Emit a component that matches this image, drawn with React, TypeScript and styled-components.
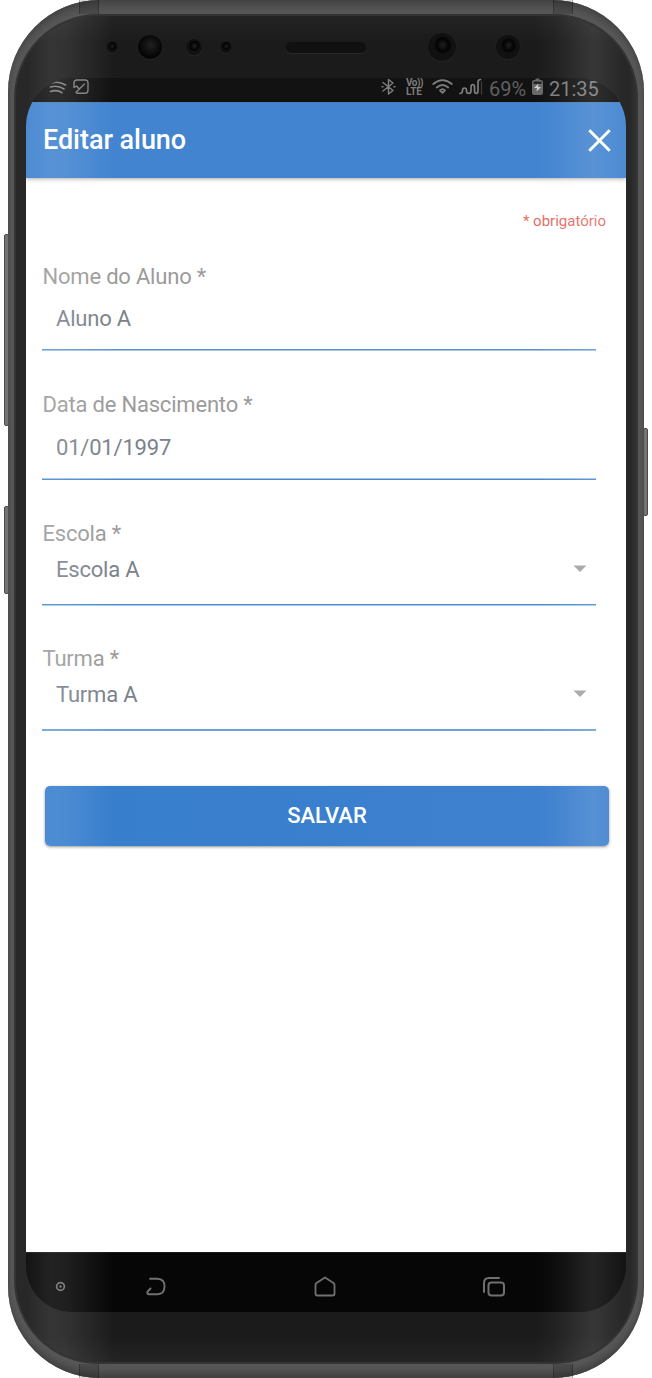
import React from "react";
import styled, { createGlobalStyle } from "styled-components";

const GlobalStyle = createGlobalStyle`
  *, *::before, *::after { box-sizing: border-box; }
  body { margin: 0; background: #fff; font-family: Roboto, "Liberation Sans", sans-serif; }
`;

const Page = styled.div`
  width: 652px;
  height: 1378px;
  padding: 0 8px;
  overflow: hidden;
`;

const Device = styled.div`
  position: relative;
  width: 636px;
  height: 1378px;
  padding: 14px 6px;
  border-radius: 92px;
  background: #585858;
  box-shadow: inset 0 9px 8px -4px #414141, inset 0 -9px 8px -4px #3e3e3e, inset 0 0 2px #444;
`;

const SideKey = styled.div<{ $side: "left" | "right"; $top: number; $length: number }>`
  position: absolute;
  ${(p) => p.$side}: -4px;
  top: ${(p) => p.$top}px;
  width: 5px;
  height: ${(p) => p.$length}px;
  border: 1px solid #4d4d4d;
  border-radius: 2px;
  background: #747474;
`;

const Antenna = styled.div<{ $left: number; $edge: "top" | "bottom" }>`
  position: absolute;
  left: ${(p) => p.$left}px;
  ${(p) => p.$edge}: 0;
  width: 20px;
  height: 14px;
  background: rgba(0, 0, 0, 0.15);
  border: solid rgba(0, 0, 0, 0.22);
  border-width: 0 1px;
`;

const Bezel = styled.div`
  position: relative;
  display: flex;
  flex-direction: column;
  height: 1350px;
  padding: 0 10px;
  border: 2px solid #343434;
  border-radius: 84px;
  background: linear-gradient(#242424, #1b1b1b 26px, #1b1b1b 1320px, #242424);
  overflow: hidden;
`;

const Glare = styled.div`
  position: absolute;
  inset: 0;
  pointer-events: none;
  background:
    linear-gradient(to right, rgba(255,255,255,.06), rgba(255,255,255,.055) 10px, rgba(255,255,255,.115) 34px, rgba(255,255,255,.1) 50px, rgba(255,255,255,.05) 74px, transparent 98px),
    linear-gradient(to left, rgba(255,255,255,.1), rgba(255,255,255,.055) 6px, rgba(255,255,255,.055) 11px, rgba(255,255,255,.12) 42px, rgba(255,255,255,.1) 52px, rgba(255,255,255,.03) 80px, transparent 100px);
`;

const Sensors = styled.div`
  display: flex;
  align-items: center;
  flex: none;
  height: 62px;
  padding-left: 80px;
`;

const Lens = styled.div<{ $size: number; $gap: number; $core: number }>`
  flex: none;
  width: ${(p) => p.$size}px;
  height: ${(p) => p.$size}px;
  margin-right: ${(p) => p.$gap}px;
  border-radius: 50%;
  background: radial-gradient(circle at 53% 43%, #202020 0, #050505 ${(p) => p.$core}%, #050505 ${(p) => p.$core + 6}%, #111 ${(p) => p.$core + 16}%);
  box-shadow: 0 0 0 1px #202020, 0 1px 1px #303030;
`;

const Speaker = styled.div`
  width: 80px;
  height: 11px;
  margin-right: 62px;
  border-radius: 6px;
  background: #101010;
  box-shadow: 0 1px 1px #2b2b2b;
`;

const Screen = styled.div`
  display: flex;
  flex-direction: column;
  flex: none;
  width: 600px;
  height: 1234px;
  border-radius: 48px 48px 46px 46px;
  overflow: hidden;
`;

const StatusBar = styled.div`
  display: flex;
  align-items: flex-start;
  flex: none;
  height: 24px;
  padding: 0 27px 0 23px;
  background: #121212;
  color: #7d7d7d;
  svg { display: block; flex: none; }
`;

const StatusGroup = styled.div<{ $end?: boolean }>`
  display: flex;
  gap: 6px;
  margin-left: ${(p) => (p.$end ? "auto" : "0")};
`;

const StatusText = styled.span<{ $width: number; $dim?: boolean }>`
  width: ${(p) => p.$width}px;
  font-size: 20px;
  line-height: 23px;
  white-space: nowrap;
  color: ${(p) => (p.$dim ? "#606060" : "#7d7d7d")};
`;

const Volte = styled.div`
  display: flex;
  flex-direction: column;
  width: 18px;
  margin: 0 2px 0 4px;
  font-size: 10px;
  font-weight: 700;
  line-height: 9px;
  letter-spacing: -0.4px;
  white-space: nowrap;
`;

const VolteLine = styled.span<{ $spacing: number }>`
  letter-spacing: ${(p) => p.$spacing}px;
`;

const AppBar = styled.header`
  display: flex;
  align-items: center;
  justify-content: space-between;
  flex: none;
  height: 76px;
  padding: 0 15px 1px 17px;
  position: relative;
  background: #4284d0;
  border-top: 1px solid #4b7db8;
  box-shadow: 0 1px 4px rgba(0, 0, 0, 0.35);
  color: #fff;
`;

const Title = styled.h1`
  margin: 0;
  font-size: 27px;
  font-weight: 500;
  line-height: 36px;
  letter-spacing: -0.05px;
`;

const Form = styled.form`
  display: flex;
  flex-direction: column;
  flex: 1;
  padding: 33px 17px 0 16px;
  background: #fff;
`;

const RequiredNote = styled.div`
  align-self: flex-end;
  height: 20px;
  margin: 0 3px 30px 0;
  font-size: 15px;
  line-height: 20px;
  color: #e56b65;
`;

const Field = styled.label<{ $gap: number }>`
  display: flex;
  flex-direction: column;
  width: 554px;
  margin-bottom: ${(p) => p.$gap}px;
`;

const LabelText = styled.span`
  height: 30px;
  padding-left: 0.5px;
  font-size: 22px;
  line-height: 31px;
  letter-spacing: -0.2px;
  color: #9b9b9b;
`;

const Value = styled.span<{ $before: number; $after: number }>`
  display: flex;
  align-items: center;
  justify-content: space-between;
  padding: ${(p) => p.$before}px 9px ${(p) => p.$after}px 14px;
  font-size: 22px;
  line-height: 30px;
  letter-spacing: -0.2px;
  color: #7a828c;
  svg { margin-bottom: 3px; }
`;

const Underline = styled.span<{ $upper: string; $lower: string }>`
  height: 2px;
  border-top: 1px solid ${(p) => p.$upper};
  background: ${(p) => p.$lower};
`;

const SaveButton = styled.button`
  height: 60px;
  margin: 0 0 0 3px;
  padding: 0 0 1px;
  border: 0;
  border-radius: 5px;
  background: linear-gradient(90deg, #367ecd, #3f81cf);
  box-shadow: 0 1px 3px rgba(0, 0, 0, 0.45);
  color: #fff;
  font: 500 22px/30px Roboto, "Liberation Sans", sans-serif;
`;

const NavBar = styled.nav`
  display: flex;
  align-items: center;
  flex: none;
  height: 60px;
  padding: 8px 0 0 29px;
  border-top: 1px solid #1a1a1a;
  background: #060606;
  color: #707070;
`;

const NavItem = styled.span<{ $width: number; $gap: number }>`
  display: flex;
  width: ${(p) => p.$width}px;
  margin-right: ${(p) => p.$gap}px;
`;

const stroke = {
  fill: "none",
  stroke: "currentColor",
  strokeLinecap: "round" as const,
  strokeLinejoin: "round" as const,
};

const StreamIcon = () => (
  <svg width="18" height="24" {...stroke} strokeWidth="1.6">
    <path d="M3 5C7 3.800 12 4.200 16.500 7M1.500 9C6 7.800 11 8.200 15 11M1.500 13.500C6 12 10 12.500 13 14.700" />
  </svg>
);

const ImageIcon = () => (
  <svg width="16" height="24" {...stroke} strokeWidth="1.4">
    <path d="M1 9.500V5Q1 2 4 2H12Q15 2 15 5V12Q15 15.200 12 15.200H4L3 14.200L11.500 6M1 9.500L3.500 8L6 10.800" />
  </svg>
);

const BluetoothIcon = () => (
  <svg width="15" height="24" {...stroke} strokeWidth="1.5">
    <path d="M2 4.500L12 12.500L7.500 16V1.500L12 5L2 13M1 8.800H2M13 8.800H14" />
  </svg>
);

const WifiIcon = () => (
  <svg width="21" height="24" {...stroke} strokeWidth="1.8">
    <path d="M1.200 6Q10.500-1.800 19.800 6M4.800 9.500Q10.500 4.500 16.200 9.500" />
    <path d="M8 12.300Q10.500 9.800 13 12.300L10.500 14.800Z" />
  </svg>
);

const SignalIcon = () => (
  <svg width="24" height="24" {...stroke} strokeWidth="1.700">
    <path d="M1 15.500Q3.500 15.500 3.500 12.500Q3.500 10 5.500 10Q7.500 10 7.500 12.500Q7.500 15.500 9.700 15.500Q12 15.500 12 12.500V9Q12 6.500 13.800 6.500Q15.500 6.500 15.500 9V12.500Q15.500 15.500 17.300 15.500Q19 15.500 19 12.500V4Q19 1.500 21.500 1.500" />
    <path d="M22.500 4V16" opacity=".4" strokeWidth="1.3" />
  </svg>
);

const BatteryIcon = () => (
  <svg width="11" height="24">
    <path d="M3.500 0.500H7.500V2H9Q11 2 11 4V15Q11 17 9 17H2Q0 17 0 15V4Q0 2 2 2H3.500Z" fill="#686868" />
    <path d="M1.500 3.500H9.500V6H1.500Z" fill="#242424" />
    <path d="M6.500 5.500L2 10H5L4.500 13.500L9 9H6Z" fill="#d0d0d0" />
  </svg>
);

const CloseIcon = () => (
  <svg width="23" height="23" {...stroke} strokeLinecap="butt" strokeWidth="2.900">
    <path d="M1.300 1.300L21.700 21.700M21.700 1.300L1.300 21.700" />
  </svg>
);

const Caret = () => (
  <svg width="14" height="8" viewBox="0 0 14 8">
    <path d="M0.500 0.500H13.500L7 7Z" fill="#a3a3a3" />
  </svg>
);

const DotIcon = () => (
  <svg width="11" height="11" {...stroke} strokeWidth="1.700">
    <circle cx="5.500" cy="5.500" r="3.900" />
    <circle cx="5.500" cy="5.500" r="1.200" fill="currentColor" stroke="none" />
  </svg>
);

const BackIcon = () => (
  <svg width="20" height="20" {...stroke} strokeWidth="1.900">
    <path d="M4 1.800H11.500Q18.500 2 18.500 9.500Q18.500 17.200 11.500 17.200H3Q0.500 17.200 1.700 14.500L4.500 11.500" />
  </svg>
);

const HomeIcon = () => (
  <svg width="22" height="22" {...stroke} strokeWidth="1.800">
    <path d="M11 1.500L2.500 7Q1.500 8 1.500 9V17.500Q1.500 19.500 3.500 19.500H18.500Q20.500 19.500 20.500 17.500V9Q20.500 8 19.500 7Z" />
  </svg>
);

const RecentsIcon = () => (
  <svg width="24" height="22" {...stroke} strokeWidth="2">
    <rect x="6.500" y="6.500" width="15.500" height="13" rx="3" />
    <path d="M2 16V7Q2 2 7 2H17" />
  </svg>
);

const fields = [
  { label: "Nome do Aluno *", value: "Aluno A", before: 13, after: 15, gap: 38, upper: "#5d95d4", lower: "#a2c2e6", select: false },
  { label: "Data de Nascimento *", value: "01/01/1997", before: 14, after: 15, gap: 38, upper: "#a2c4e9", lower: "#4a88cd", select: false },
  { label: "Escola *", value: "Escola A", before: 7, after: 19, gap: 37, upper: "#4c8bd1", lower: "#a7c8e9", select: true },
  { label: "Turma *", value: "Turma A", before: 7, after: 19, gap: 55, upper: "#659ed8", lower: "#71a5da", select: true },
];

export default function App() {
  return (
    <>
      <GlobalStyle />
      <Page>
        <Device>
          <Antenna $left={71} $edge="top" />
          <Antenna $left={545} $edge="top" />
          <Antenna $left={71} $edge="bottom" />
          <Antenna $left={545} $edge="bottom" />
          <SideKey $side="left" $top={234} $length={192} />
          <SideKey $side="left" $top={506} $length={88} />
          <SideKey $side="right" $top={428} $length={88} />
          <Bezel>
            <Sensors>
              <Lens $size={12} $gap={20} $core={30} />
              <Lens $size={24} $gap={24} $core={62} />
              <Lens $size={16} $gap={18} $core={30} />
              <Lens $size={12} $gap={54} $core={30} />
              <Speaker />
              <Lens $size={28} $gap={40} $core={26} />
              <Lens $size={24} $gap={0} $core={26} />
            </Sensors>
            <Screen>
              <StatusBar>
                <StatusGroup>
                  <StreamIcon />
                  <ImageIcon />
                </StatusGroup>
                <StatusGroup $end>
                  <BluetoothIcon />
                  <Volte>
                    <VolteLine $spacing={-0.5}>Vo))</VolteLine>
                    <VolteLine $spacing={-0.1}>LTE</VolteLine>
                  </Volte>
                  <WifiIcon />
                  <SignalIcon />
                  <StatusText $width={37} $dim>69%</StatusText>
                  <BatteryIcon />
                  <StatusText $width={50}>21:35</StatusText>
                </StatusGroup>
              </StatusBar>
              <AppBar>
                <Title>Editar aluno</Title>
                <CloseIcon />
              </AppBar>
              <Form>
                <RequiredNote>* obrigatório</RequiredNote>
                {fields.map((f) => (
                  <Field key={f.label} $gap={f.gap}>
                    <LabelText>{f.label}</LabelText>
                    <Value $before={f.before} $after={f.after}>
                      {f.value}
                      {f.select && <Caret />}
                    </Value>
                    <Underline $upper={f.upper} $lower={f.lower} />
                  </Field>
                ))}
                <SaveButton type="button">SALVAR</SaveButton>
              </Form>
              <NavBar>
                <NavItem $width={11} $gap={80}><DotIcon /></NavItem>
                <NavItem $width={20} $gap={148}><BackIcon /></NavItem>
                <NavItem $width={22} $gap={146}><HomeIcon /></NavItem>
                <NavItem $width={24} $gap={0}><RecentsIcon /></NavItem>
              </NavBar>
            </Screen>
            <Glare />
          </Bezel>
        </Device>
      </Page>
    </>
  );
}
